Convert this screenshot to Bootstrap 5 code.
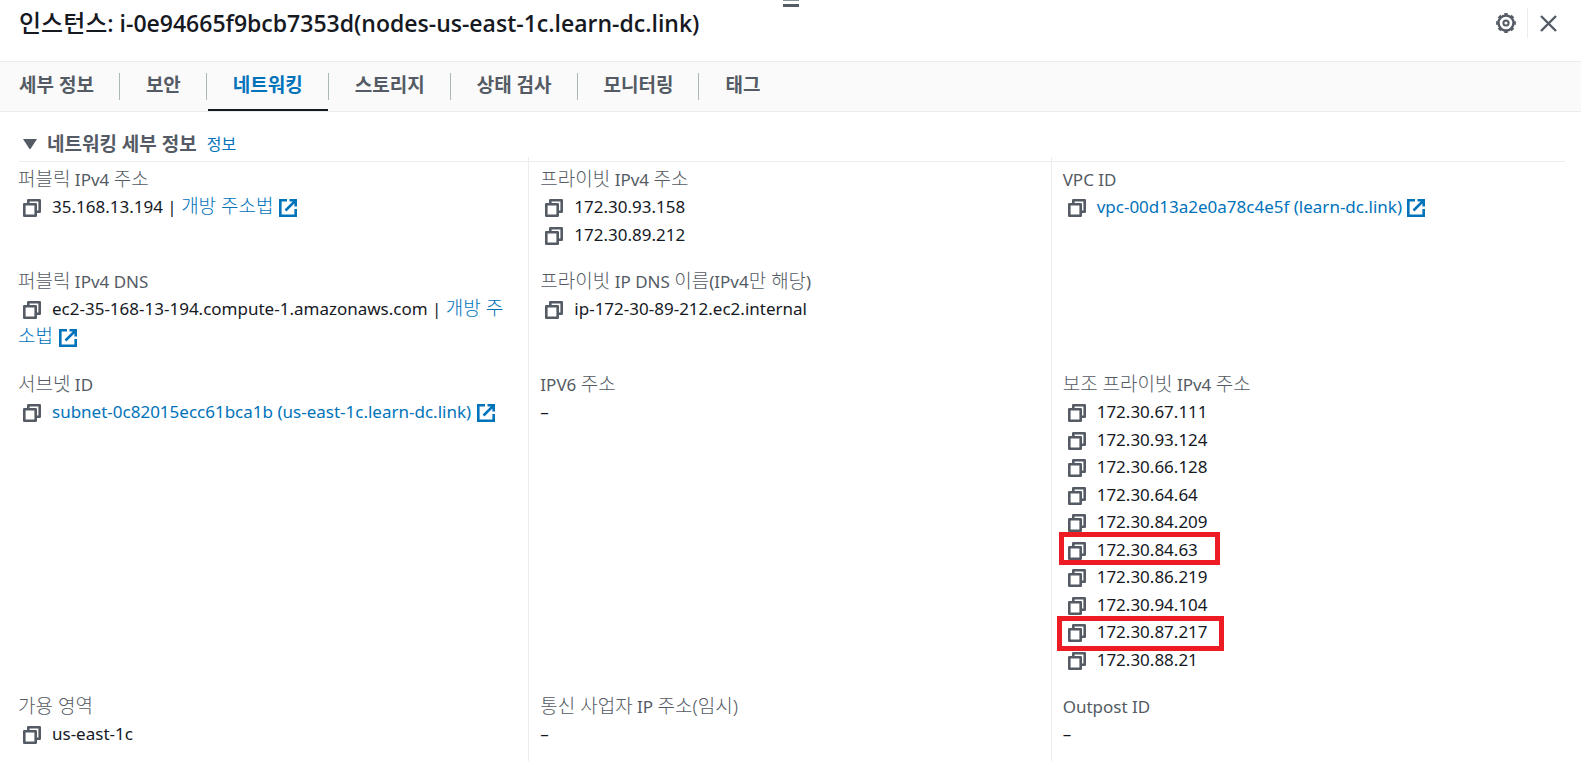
<!DOCTYPE html>
<html lang="ko">
<head>
<meta charset="utf-8">
<meta name="viewport" content="width=device-width, initial-scale=1">
<title>인스턴스 세부 정보</title>
<link href="https://cdn.jsdelivr.net/npm/bootstrap@5.3.0/dist/css/bootstrap.min.css" rel="stylesheet">
<style>
  body { font-family: "Noto Sans", "Noto Sans CJK KR", sans-serif; font-size: 17px; line-height: 28px; color: #16191f; background: #fff; }
  a { color: #0073bb; text-decoration: none; }
  a:hover { text-decoration: underline; }
  .ko { font-size: 19px; line-height: 1; }
  svg { fill: none; stroke: currentColor; display: block; }

  .panel-head { height: 61px; padding: 0 16px 15px 19px; }
  .panel-title { font: 600 23px/32px "Open Sans", "Noto Sans CJK KR", sans-serif; }
  .panel-title .ko { font-size: 24px; font-weight: 500; }
  .grip { width: 16px; height: 7px; top: 0; left: 50%; margin-left: -8px; border-top: 1px solid #879596; border-bottom: 3px solid #545b64; }
  .tool { color: #545b64; border: 0; background: none; padding: 0; }
  .tool-sep { width: 1px; height: 30px; background: #eaeded; margin: 0 12px 0 11px; }

  .tabs { background: #fafafa; border-top: 1px solid #eaeded; border-bottom: 1px solid #eaeded; height: 51px; padding-left: 19px; }
  .tabs li { display: flex; align-items: stretch; }
  .tabs li + li::before { content: ""; width: 1px; height: 27px; margin-top: 11px; background: #aab7b8; }
  .tabs .nav-link { font-size: 19px; font-weight: 700; line-height: 24px; color: #545b64; padding: 11px 25px 0; border-radius: 0; margin-left: 1px; }
  .tabs li:first-child .nav-link { padding-left: 0; margin-left: 0; }
  .tabs .nav-link.active { color: #0073bb; border-bottom: 2px solid #16191f; }

  .section-head { height: 49px; padding: 16px 23px 2px; color: #545b64; }
  .section-head h2 { font-size: 19px; font-weight: 700; line-height: 28px; margin-left: 10px; }
  .section-head a { font-size: 16px; margin-left: 10px; line-height: 28px; }
  .rule { height: 1px; background: #eaeded; margin: 0 16px 0 19px; }

  .fields { margin-top: -5px; padding: 0 8px 0 7px; }
  .fields > .row:first-child > .col { padding-top: 9px; padding-bottom: 19px; }
  .fields .col { padding: 0 14px 20px 11px; }
  .fields .col + .col { border-left: 1px solid #eaeded; }
  .name { color: #545b64; line-height: 27px; height: 27px; }
  .name .ko, .val a.ko { font-weight: 300; }
  .copy { border: 0; background: none; padding: 0; color: #545b64; display: inline-block; vertical-align: -4px; margin: 0 11px 0 5px; line-height: 0; }
  .ext { display: inline-block; vertical-align: -4px; margin-left: 1px; }
  .ip-list { display: grid; grid-auto-rows: 1fr; height: 275px; line-height: 27px; }
  .hit { position: relative; }
  .hit::after { content: ""; position: absolute; top: -4px; left: -4px; width: 161px; height: 33px; border: 5px solid #ed1c24; pointer-events: none; }
  .hit.wide::after { top: -2px; left: -6px; width: 167px; height: 35px; }
</style>
</head>
<body>
<svg width="0" height="0" class="position-absolute" aria-hidden="true">
  <symbol id="i-copy" viewBox="0 0 18 18"><path d="M1.300 5.300h11.400v11.400H1.300zM5.300 5V1.300h11.400v11.400H13" stroke-width="2.600" stroke-linejoin="round"/></symbol>
  <symbol id="i-ext" viewBox="0 0 18 18"><path d="M8 1.300H1.300v15.400h15.400V10M10.500 1.300h6.200v6.200M16.700 1.300L6.500 11.500" stroke-width="2.600"/></symbol>
</svg>

<header class="panel-head d-flex align-items-center justify-content-between position-relative">
  <div class="grip position-absolute"></div>
  <h1 class="panel-title m-0"><span class="ko">인스턴스</span>: i-0e94665f9bcb7353d(nodes-us-east-1c.learn-dc.link)</h1>
  <div class="d-flex align-items-center">
    <button class="tool" type="button" aria-label="설정">
      <svg width="20" height="20" viewBox="0 0 20 20"><circle cx="10" cy="10" r="7.500" stroke-width="2.400"/><circle cx="10" cy="10" r="9" stroke-width="1.800" pathLength="80" stroke-dasharray="5 5" stroke-dashoffset="2.500"/><circle cx="10" cy="10" r="2.600" stroke-width="2"/></svg>
    </button>
    <div class="tool-sep"></div>
    <button class="tool me-2" type="button" aria-label="닫기">
      <svg width="17" height="17" viewBox="0 0 17 17" stroke-width="2.400"><path d="M1 1l15 15M16 1L1 16"/></svg>
    </button>
  </div>
</header>

<ul class="tabs nav flex-nowrap">
  <li><a class="nav-link" href="#">세부 정보</a></li>
  <li><a class="nav-link" href="#">보안</a></li>
  <li><a class="nav-link active" href="#" aria-current="page">네트워킹</a></li>
  <li><a class="nav-link" href="#">스토리지</a></li>
  <li><a class="nav-link" href="#">상태 검사</a></li>
  <li><a class="nav-link" href="#">모니터링</a></li>
  <li><a class="nav-link" href="#">태그</a></li>
</ul>

<main>
  <div class="section-head d-flex align-items-center">
    <button class="tool" type="button" aria-label="접기"><svg width="14" height="10" viewBox="0 0 14 10"><path d="M0 0h14L7.500 10h-1z" fill="#545b64" stroke="none"/></svg></button>
    <h2 class="mb-0">네트워킹 세부 정보</h2>
    <a href="#">정보</a>
  </div>
  <div class="rule"></div>

  <div class="fields">
    <div class="row g-0">
      <div class="col">
        <div class="name"><span class="ko">퍼블릭</span> IPv4 <span class="ko">주소</span></div>
        <div class="val"><button class="copy" type="button" aria-label="복사"><svg width="18" height="18"><use href="#i-copy"/></svg></button>35.168.13.194 | <a class="ko" href="#">개방 주소법 <svg class="ext" width="18" height="18"><use href="#i-ext"/></svg></a></div>
      </div>
      <div class="col">
        <div class="name"><span class="ko">프라이빗</span> IPv4 <span class="ko">주소</span></div>
        <div class="val"><button class="copy" type="button" aria-label="복사"><svg width="18" height="18"><use href="#i-copy"/></svg></button>172.30.93.158</div>
        <div class="val"><button class="copy" type="button" aria-label="복사"><svg width="18" height="18"><use href="#i-copy"/></svg></button>172.30.89.212</div>
      </div>
      <div class="col">
        <div class="name">VPC ID</div>
        <div class="val"><button class="copy" type="button" aria-label="복사"><svg width="18" height="18"><use href="#i-copy"/></svg></button><a href="#">vpc-00d13a2e0a78c4e5f (learn-dc.link) <svg class="ext" width="18" height="18"><use href="#i-ext"/></svg></a></div>
      </div>
    </div>

    <div class="row g-0">
      <div class="col">
        <div class="name"><span class="ko">퍼블릭</span> IPv4 DNS</div>
        <div class="val"><button class="copy" type="button" aria-label="복사"><svg width="18" height="18"><use href="#i-copy"/></svg></button>ec2-35-168-13-194.compute-1.amazonaws.com | <a class="ko" href="#">개방 주소법 <svg class="ext" width="18" height="18"><use href="#i-ext"/></svg></a></div>
      </div>
      <div class="col">
        <div class="name"><span class="ko">프라이빗</span> IP DNS <span class="ko">이름</span>(IPv4<span class="ko">만 해당</span>)</div>
        <div class="val"><button class="copy" type="button" aria-label="복사"><svg width="18" height="18"><use href="#i-copy"/></svg></button>ip-172-30-89-212.ec2.internal</div>
      </div>
      <div class="col"></div>
    </div>

    <div class="row g-0">
      <div class="col">
        <div class="name"><span class="ko">서브넷</span> ID</div>
        <div class="val"><button class="copy" type="button" aria-label="복사"><svg width="18" height="18"><use href="#i-copy"/></svg></button><a href="#">subnet-0c82015ecc61bca1b (us-east-1c.learn-dc.link) <svg class="ext" width="18" height="18"><use href="#i-ext"/></svg></a></div>
      </div>
      <div class="col">
        <div class="name">IPV6 <span class="ko">주소</span></div>
        <div class="val">–</div>
      </div>
      <div class="col">
        <div class="name"><span class="ko">보조 프라이빗</span> IPv4 <span class="ko">주소</span></div>
        <ul class="ip-list list-unstyled m-0">
          <li><button class="copy" type="button" aria-label="복사"><svg width="18" height="18"><use href="#i-copy"/></svg></button>172.30.67.111</li>
          <li><button class="copy" type="button" aria-label="복사"><svg width="18" height="18"><use href="#i-copy"/></svg></button>172.30.93.124</li>
          <li><button class="copy" type="button" aria-label="복사"><svg width="18" height="18"><use href="#i-copy"/></svg></button>172.30.66.128</li>
          <li><button class="copy" type="button" aria-label="복사"><svg width="18" height="18"><use href="#i-copy"/></svg></button>172.30.64.64</li>
          <li><button class="copy" type="button" aria-label="복사"><svg width="18" height="18"><use href="#i-copy"/></svg></button>172.30.84.209</li>
          <li class="hit"><button class="copy" type="button" aria-label="복사"><svg width="18" height="18"><use href="#i-copy"/></svg></button>172.30.84.63</li>
          <li><button class="copy" type="button" aria-label="복사"><svg width="18" height="18"><use href="#i-copy"/></svg></button>172.30.86.219</li>
          <li><button class="copy" type="button" aria-label="복사"><svg width="18" height="18"><use href="#i-copy"/></svg></button>172.30.94.104</li>
          <li class="hit wide"><button class="copy" type="button" aria-label="복사"><svg width="18" height="18"><use href="#i-copy"/></svg></button>172.30.87.217</li>
          <li><button class="copy" type="button" aria-label="복사"><svg width="18" height="18"><use href="#i-copy"/></svg></button>172.30.88.21</li>
        </ul>
      </div>
    </div>

    <div class="row g-0">
      <div class="col">
        <div class="name"><span class="ko">가용 영역</span></div>
        <div class="val"><button class="copy" type="button" aria-label="복사"><svg width="18" height="18"><use href="#i-copy"/></svg></button>us-east-1c</div>
      </div>
      <div class="col">
        <div class="name"><span class="ko">통신 사업자</span> IP <span class="ko">주소(임시)</span></div>
        <div class="val">–</div>
      </div>
      <div class="col">
        <div class="name">Outpost ID</div>
        <div class="val">–</div>
      </div>
    </div>
  </div>
</main>
<script src="https://cdn.jsdelivr.net/npm/bootstrap@5.3.0/dist/js/bootstrap.bundle.min.js"></script>
</body>
</html>
